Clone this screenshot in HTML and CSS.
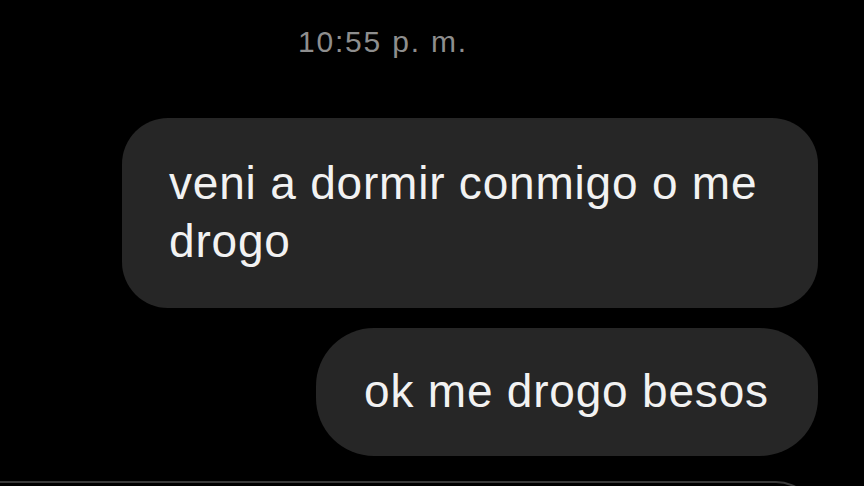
FILE: index.html
```html
<!DOCTYPE html>
<html lang="es">
<head>
<meta charset="utf-8">
<link rel="stylesheet" href="styles.css">
</head>
<body>
<div class="chat">
  <div class="time">10:55 p. m.</div>
  <div class="msgs">
    <div class="bubble b1">veni a dormir conmigo o me drogo</div>
    <div class="bubble b2">ok me drogo besos</div>
  </div>
  <div class="composer"></div>
</div>
</body>
</html>
```
FILE: styles.css
```css
html, body {
  margin: 0;
  padding: 0;
  background: #000;
}
.chat {
  width: 864px;
  height: 486px;
  overflow: hidden;
  display: flex;
  flex-direction: column;
  font-family: "Liberation Sans", Arial, sans-serif;
}
.time {
  padding-top: 24px;
  padding-left: 298px;
  font-size: 30px;
  line-height: 36px;
  color: #8e8e8e;
  letter-spacing: 1.8px;
}
.msgs {
  display: flex;
  flex-direction: column;
  align-items: flex-end;
  gap: 20px;
  padding-right: 46px;
  margin-top: 58px;
}
.bubble {
  background: #262626;
  color: #f2f2f2;
  font-size: 46px;
  line-height: 58px;
  letter-spacing: 0.8px;
  box-sizing: border-box;
}
.b1 {
  width: 696px;
  height: 190px;
  border-radius: 46px;
  padding: 36px 20px 0 47px;
}
.b2 {
  width: 502px;
  height: 128px;
  border-radius: 58px;
  padding: 34px 20px 0 48px;
}
.composer {
  margin-top: 25px;
  width: 818px;
  height: 60px;
  flex: none;
  box-sizing: border-box;
  border-top: 2px solid #3a3a3a;
  border-right: 2px solid #3a3a3a;
  border-top-right-radius: 42px;
}
```
